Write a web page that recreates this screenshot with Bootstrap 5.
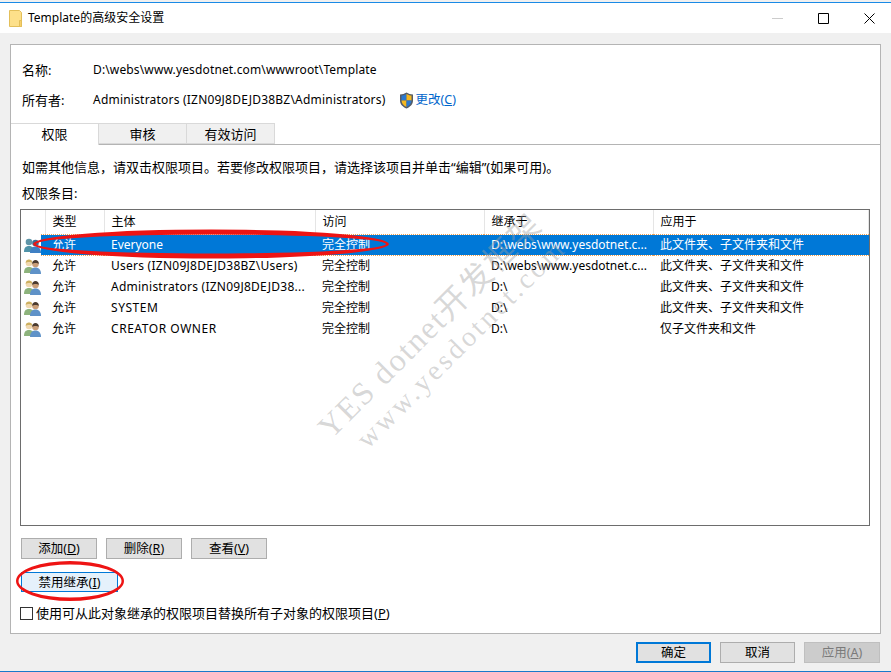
<!DOCTYPE html>
<html lang="zh"><head><meta charset="utf-8"><title>Template的高级安全设置</title>
<link href="https://cdn.jsdelivr.net/npm/bootstrap@5.3.0/dist/css/bootstrap.min.css" rel="stylesheet">
<style>
html,body{margin:0;height:672px;overflow:hidden}
body{background:#f0f0f0;color:#000;font:13px/16px "Noto Sans","Noto Sans CJK SC",sans-serif;position:relative}
.win{height:672px;display:flex;flex-direction:column;border-bottom:1px solid #1979ca}
.tbar{height:31px;background:#fff;border-top:1px solid #1a8ae6;margin-top:2px;padding-left:9px;flex:none}
.tbar-t{margin-left:5px;font-size:12px}
.ctl{width:46px;display:flex;justify-content:center}
.ctl-wrap{margin-right:-1px}
.panel{flex:none;height:590px;margin:11px 10px 0;border:1px solid #b4b4b4;background:#fff;position:relative;display:flex;flex-direction:column}
.info{height:78px;padding:17px 0 0 11px;flex:none}
.inforow{height:30px}
.lbl{width:71px;flex:none}
.val{font-size:12px;letter-spacing:.14px}
.val2{letter-spacing:.21px}
.shld{margin-left:13px}
.lnk{color:#0066cc;text-decoration:none;margin-left:2px;font-size:12.5px}
.tabsx{height:22px;flex:none;border-bottom:1px solid #b4b4b4;padding:0;flex-wrap:nowrap}
.tabsx .nav-link{width:88px;height:21px;padding:2px 0 0;border:1px solid #d9d9d9;border-left:0;border-radius:0;margin:0;background:#f0f0f0;color:#000;text-align:center;font-size:13px;line-height:16px}
.tabsx .nav-link.active{background:#fff;height:22px;border:0;border-right:1px solid #d9d9d9;border-top:1px solid #d9d9d9;color:#000;position:relative}
.hint{padding:14px 0 0 11px;height:39px;flex:none}
.hint2{padding:1px 0 0 11px;height:25px;flex:none}
.lst{flex:none;height:317px;margin:0 10px 0 9px;border:1px solid #6d6d6d;background:#fff;overflow:hidden}
.lst table{table-layout:fixed;width:848px;margin:0;--bs-table-bg:transparent;color:#000}
.lst td,.lst th{padding:0 0 0 7px;border:0;font-weight:400;font-size:12px;line-height:16px;vertical-align:middle;white-space:nowrap;overflow:hidden;text-overflow:ellipsis;color:#000;box-shadow:none}
.lst thead th{height:24px;border-right:1px solid #e5e5e5}
.lst thead th:first-child{padding:0}
.lst tbody td{height:21px}
.lst tbody td:first-child{padding:0 0 0 3px}
.lst tbody td.c2{padding-left:11px}
.lst td.nm{letter-spacing:.25px}
.lst td.nm2{letter-spacing:.55px}
.lst tr.sel td.sc{background:#0078d7;color:#fff;border-top:1px dotted #f0a050;border-bottom:1px dotted #f0a050}
.acts{padding:12px 0 0 10px;height:46px;flex:none;gap:9px}
.xb{background:#e1e1e1;border:1px solid #adadad;color:#000;height:21px;width:76px;font-size:12.5px;line-height:17px;padding:0;border-radius:0}
.xb:hover{background:#e1e1e1;color:#000;border-color:#adadad}
.xb u{text-underline-offset:1px}
.xb-hot{background:#e5f1fb;border-color:#0078d7;width:97px;height:20px}
.xb-hot:hover{background:#e5f1fb;border-color:#0078d7}
.inh{padding:0 0 0 10px;height:33px;flex:none}
.chkrow{padding:0 0 0 9px;margin:0;min-height:0;display:flex;align-items:center;height:16px}
.chkrow .form-check-input{float:none;margin:0 3px 0 0;width:13px;height:13px;border:1px solid #333;border-radius:0;background-color:#fff}
.foot{flex:none;padding:8px 11px 0 0;gap:9px;justify-content:flex-end}
.foot .xb-nar{width:75px}
.xb-def{border:2px solid #0078d7;line-height:15px}
.xb-def:hover{border-color:#0078d7}
.xb-dis,.xb-dis:disabled{background:#ccc;border:1px solid #bfbfbf;color:#7a7a7a;opacity:1}
.wm{position:absolute;white-space:nowrap;font-family:"Liberation Serif","Noto Sans CJK SC",serif;color:rgba(160,160,160,.42);transform-origin:0 100%;pointer-events:none;font-weight:400}
.wm1{left:336px;top:409px;font-size:32px;line-height:36px;transform:rotate(-45deg);letter-spacing:1.8px}
.wm2{left:372px;top:424px;font-size:28px;line-height:30px;transform:rotate(-45deg);letter-spacing:3.2px}
.ink{position:absolute;left:0;top:0;pointer-events:none}
</style></head><body>
<div class="win">
  <div class="tbar d-flex align-items-center">
    <svg width="14" height="17" viewBox="0 0 14 17"><path d="M.5.5h10l2 2v14H.5z" fill="#fde08a" stroke="#e3bf5a"/><path d="M10.500 10.500h2v6h-2z" fill="#f8d06c" stroke="#e3bf5a"/></svg>
    <span class="tbar-t">Template的高级安全设置</span>
    <div class="ms-auto d-flex align-items-center ctl-wrap">
      <div class="ctl"><svg width="11" height="11" viewBox="0 0 11 11"><path d="M0 5.500h11" stroke="#ccc"/></svg></div>
      <div class="ctl"><svg width="11" height="11" viewBox="0 0 11 11"><path d="M.5.500h10v10H.5z" fill="none" stroke="#000"/></svg></div>
      <div class="ctl"><svg width="11" height="11" viewBox="0 0 11 11"><path d="M.5.500l10 10M10.500.500l-10 10" fill="none" stroke="#000"/></svg></div>
    </div>
  </div>
  <div class="panel">
    <div class="info">
      <div class="d-flex inforow"><span class="lbl">名称:</span><span class="val">D:\webs\www.yesdotnet.com\wwwroot\Template</span></div>
      <div class="d-flex inforow"><span class="lbl">所有者:</span><span class="val val2">Administrators (IZN09J8DEJD38BZ\Administrators)</span>
        <svg class="shld" width="15" height="17" viewBox="0 0 15 17"><path d="M7.500.500c2 1.300 4 1.800 6.500 2v6c0 4-3 6.500-6.500 8C4 15 1 12.500 1 8.500v-6c2.500-.2 4.500-.7 6.500-2z" fill="#555c66"/><path d="M7.500 2v6.500H2.500V3.600c2-.2 3.500-.7 5-1.600z" fill="#2a78d0"/><path d="M7.500 2c1.500.9 3 1.400 5 1.600v4.900h-5z" fill="#f6b81f"/><path d="M2.500 8.500h5V15c-2.600-1.200-4.800-3.300-5-6.500z" fill="#f6b81f"/><path d="M7.500 8.500h5c-.2 3.200-2.400 5.300-5 6.500z" fill="#2a78d0"/></svg>
        <a class="lnk" href="#">更改(<u>C</u>)</a></div>
    </div>
    <ul class="nav nav-tabs tabsx">
      <li class="nav-item"><a class="nav-link active" href="#">权限</a></li>
      <li class="nav-item"><a class="nav-link" href="#">审核</a></li>
      <li class="nav-item"><a class="nav-link" href="#">有效访问</a></li>
    </ul>
    <div class="hint">如需其他信息，请双击权限项目。若要修改权限项目，请选择该项目并单击“编辑”(如果可用)。</div>
    <div class="hint2">权限条目:</div>
    <div class="lst">
      <table class="table"><colgroup><col style="width:24px"><col style="width:59px"><col style="width:211px"><col style="width:169px"><col style="width:169px"><col></colgroup>
        <thead><tr><th></th><th>类型</th><th>主体</th><th>访问</th><th>继承于</th><th>应用于</th></tr></thead></table>
      <table class="table"><colgroup><col style="width:20px"><col style="width:63px"><col style="width:211px"><col style="width:169px"><col style="width:169px"><col></colgroup>
        <tbody>
          <tr class="sel"><td><svg width="17" height="15" viewBox="0 0 17 15"><use href="#usr0"/></svg></td><td class="sc c2">允许</td><td class="sc">Everyone</td><td class="sc">完全控制</td><td class="sc">D:\webs\www.yesdotnet.c...</td><td class="sc">此文件夹、子文件夹和文件</td></tr>
          <tr><td><svg width="17" height="15" viewBox="0 0 17 15"><use href="#usr"/></svg></td><td class="c2">允许</td><td class="nm">Users (IZN09J8DEJD38BZ\Users)</td><td>完全控制</td><td>D:\webs\www.yesdotnet.c...</td><td>此文件夹、子文件夹和文件</td></tr>
          <tr><td><svg width="17" height="15" viewBox="0 0 17 15"><use href="#usr"/></svg></td><td class="c2">允许</td><td class="nm">Administrators (IZN09J8DEJD38...</td><td>完全控制</td><td>D:\</td><td>此文件夹、子文件夹和文件</td></tr>
          <tr><td><svg width="17" height="15" viewBox="0 0 17 15"><use href="#usr"/></svg></td><td class="c2">允许</td><td class="nm2">SYSTEM</td><td>完全控制</td><td>D:\</td><td>此文件夹、子文件夹和文件</td></tr>
          <tr><td><svg width="17" height="15" viewBox="0 0 17 15"><use href="#usr"/></svg></td><td class="c2">允许</td><td class="nm2">CREATOR OWNER</td><td>完全控制</td><td>D:\</td><td>仅子文件夹和文件</td></tr>
        </tbody></table>
    </div>
    <div class="d-flex acts">
      <button class="btn xb">添加(<u>D</u>)</button><button class="btn xb">删除(<u>R</u>)</button><button class="btn xb">查看(<u>V</u>)</button>
    </div>
    <div class="inh"><button class="btn xb xb-hot d-block">禁用继承(<u>I</u>)</button></div>
    <div class="form-check chkrow"><input class="form-check-input" type="checkbox" id="rp"><label class="form-check-label" for="rp">使用可从此对象继承的权限项目替换所有子对象的权限项目(<u>P</u>)</label></div>
  </div>
  <div class="d-flex foot">
    <button class="btn xb xb-nar xb-def">确定</button><button class="btn xb xb-nar">取消</button><button class="btn xb xb-dis" disabled>应用(<u>A</u>)</button>
  </div>
</div>
<svg width="0" height="0" class="d-block"><defs>
  <g id="usr"><path d="M0 14c0-4 1.500-6 5-6s5 2 5 6z" fill="#8db37c"/><circle cx="5" cy="4" r="3.300" fill="#f0d9b0"/><path d="M1.700 4c0-2.500 1.500-3.500 3.300-3.500S8.300 1.500 8.300 4C7 2.800 3 2.800 1.700 4z" fill="#cdb060"/><path d="M6 15c0-4 2-6.500 5.500-6.500S17 11 17 15z" fill="#5f92c8"/><circle cx="11.500" cy="5" r="3.300" fill="#c99e78"/><path d="M8.200 5c0-3 1.500-4 3.300-4s3.300 1 3.300 4c-1.500-1.300-5-1.300-6.600 0z" fill="#4a3b30"/></g>
  <g id="usr0"><path d="M0 14c0-4 1.500-6 5-6s5 2 5 6z" fill="#4f93a8"/><circle cx="5" cy="4" r="3.300" fill="#5f95a8"/><path d="M6 15c0-4 2-6.500 5.500-6.500S17 11 17 15z" fill="#3f80c4"/><circle cx="11.500" cy="5" r="3.300" fill="#3c6f95"/></g>
</defs></svg>
<div class="wm wm1">YES dotnet开发框架</div>
<div class="wm wm2">www.yesdotnet.com</div>
<svg class="ink" width="891" height="672" viewBox="0 0 891 672"><path fill="#ee1414" fill-rule="evenodd" d="M33 244a178 14.500 0 1 0 356 0a178 14.500 0 1 0-356 0zM36 244a175 9.500 0 1 1 350 0a175 9.500 0 1 1-350 0zM16 581a54 20 0 1 0 108 0a54 20 0 1 0-108 0zM18.500 581a51.500 16.500 0 1 1 103 0a51.500 16.500 0 1 1-103 0z"/></svg>
</body></html>
